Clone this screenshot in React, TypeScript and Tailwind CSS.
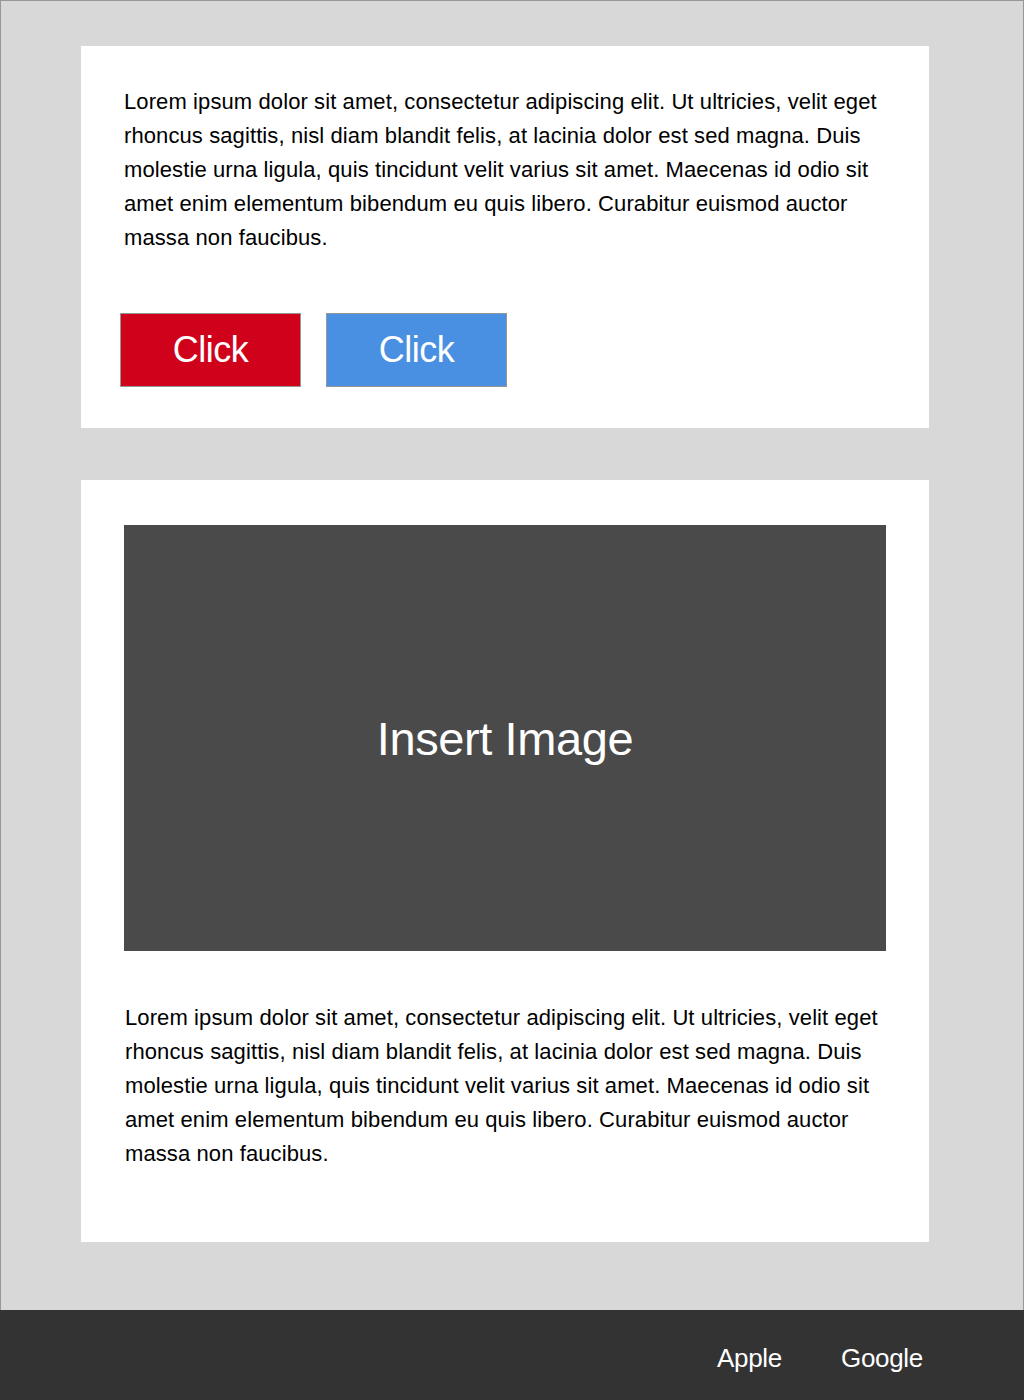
const lorem =
  "Lorem ipsum dolor sit amet, consectetur adipiscing elit. Ut ultricies, velit eget rhoncus sagittis, nisl diam blandit felis, at lacinia dolor est sed magna. Duis molestie urna ligula, quis tincidunt velit varius sit amet. Maecenas id odio sit amet enim elementum bibendum eu quis libero. Curabitur euismod auctor massa non faucibus.";

const Button = ({ color, children }: { color: string; children: string }) => (
  <button
    className={`w-[181px] h-[74px] border border-[#979797] text-white text-[36px] leading-none tracking-[-0.5px] ${color}`}
  >
    {children}
  </button>
);

export default function App() {
  return (
    <div className="w-[1024px] font-['Liberation_Sans',Arial,sans-serif]">
      <div className="border-t border-x border-[#979797] bg-[#d8d8d8] pt-[45px] pb-[68px]">
        <div className="ml-[80px] w-[848px] bg-white pt-[39px] pb-[41px] px-[39px]">
          <p className="px-[4px] text-[22px] leading-[34px] text-black tracking-[0.1px]">{lorem}</p>
          <div className="mt-[58px] flex gap-[25px]">
            <Button color="bg-[#d0021b]">Click</Button>
            <Button color="bg-[#4a90e2]">Click</Button>
          </div>
        </div>

        <div className="mt-[52px] ml-[80px] w-[848px] bg-white pt-[45px] pb-[71px] px-[43px]">
          <div className="w-[762px] h-[426px] bg-[#4a4a4a] flex items-center justify-center">
            <span className="mt-[3px] text-white text-[47px] tracking-[-0.4px]">Insert Image</span>
          </div>
          <p className="mt-[50px] pl-[1px] text-[22px] leading-[34px] text-black tracking-[0.1px]">{lorem}</p>
        </div>
      </div>

      <footer className="h-[90px] bg-[#333333] flex items-center justify-end pr-[101px] gap-[59px] text-white text-[26px] tracking-[-0.3px]">
        <a className="mt-[6px]">Apple</a>
        <a className="mt-[6px]">Google</a>
      </footer>
    </div>
  );
}
